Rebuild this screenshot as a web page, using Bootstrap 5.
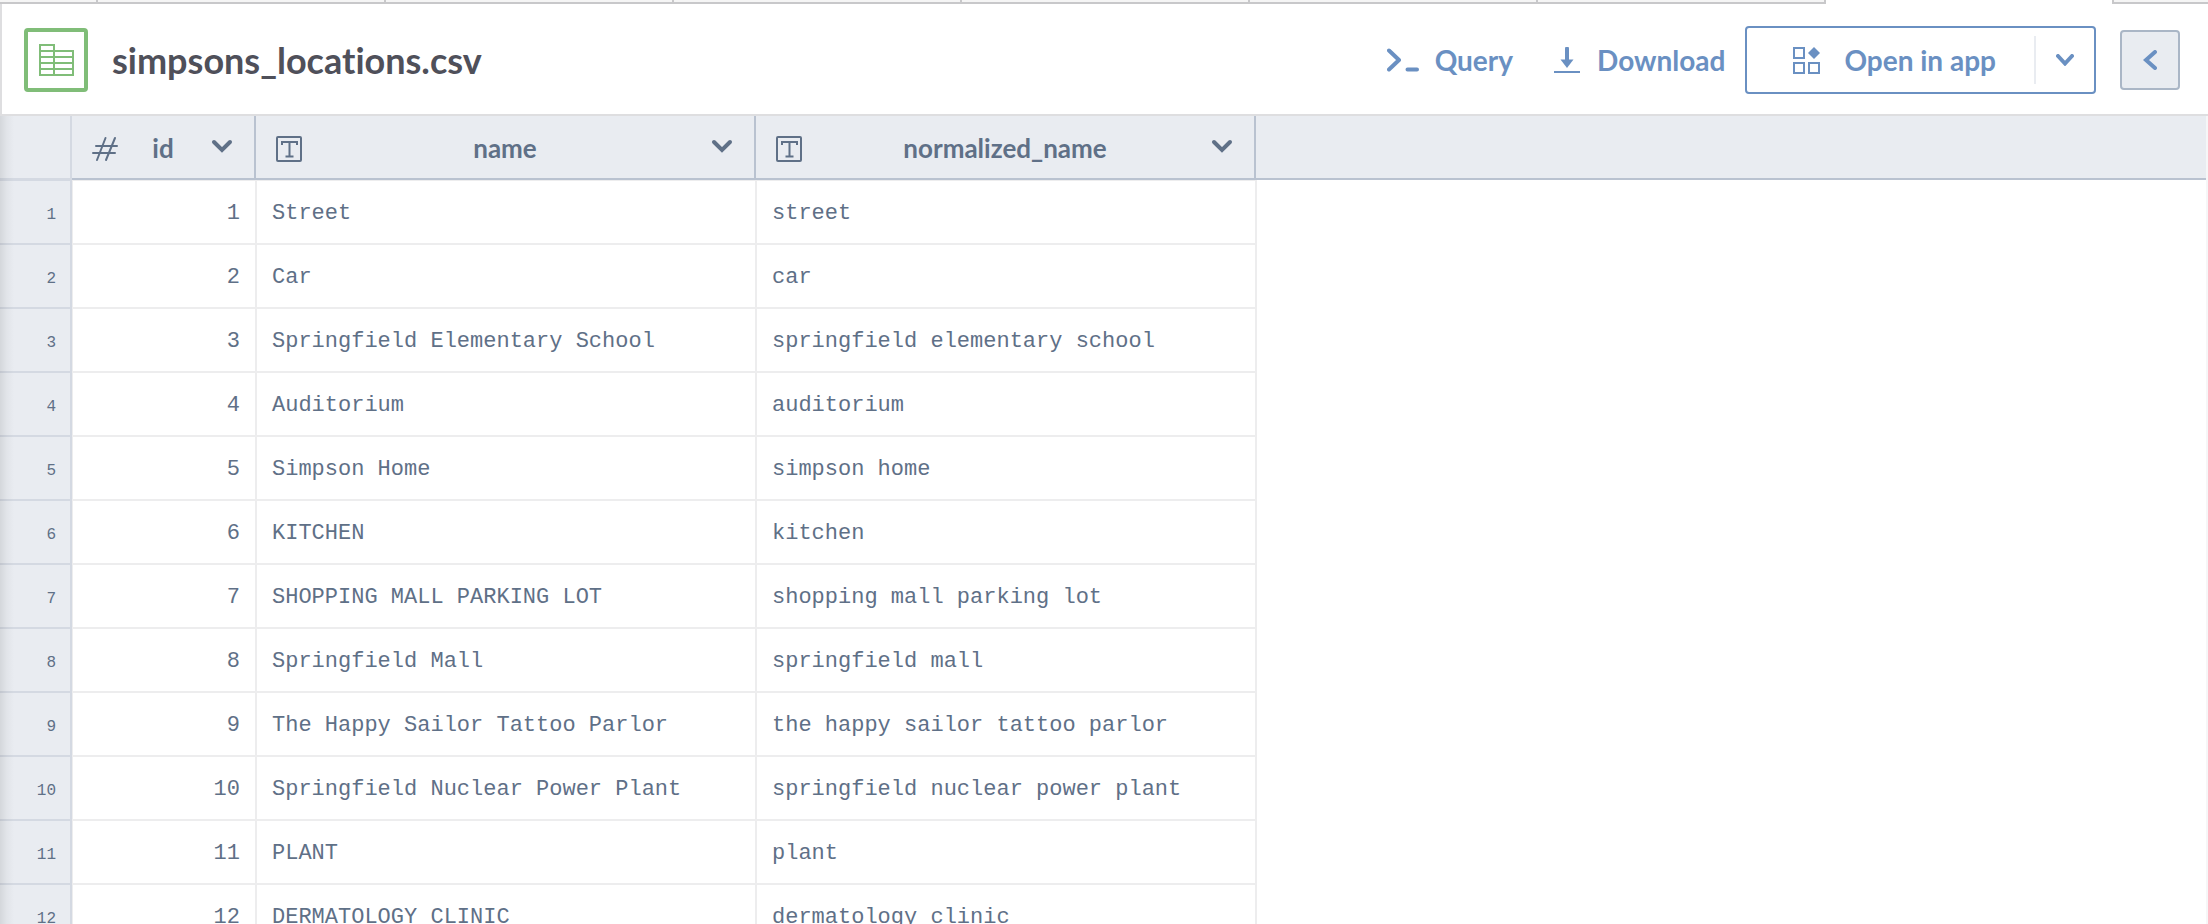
<!DOCTYPE html>
<html lang="en">
<head>
<meta charset="utf-8">
<meta name="viewport" content="width=device-width, initial-scale=1">
<title>simpsons_locations.csv</title>
<link href="https://cdn.jsdelivr.net/npm/bootstrap@5.3.0/dist/css/bootstrap.min.css" rel="stylesheet">
<style>
  :root { --accent: #6a90c2; --slate: #5f7087; --panel: #e9ecf1; --rule: #b9c2d0; --cell-rule: #ededee; --side-rule: #d4d9e2; }
  body { font-family: Lato, "Open Sans", sans-serif; font-variant-ligatures: none; color: var(--slate); background: #fff; }
  svg { display: block; flex: none; fill: none; stroke: currentColor; }

  /* tab strip */
  .strip-tab { height: 4px; background: #f5f5f5; border-bottom: 2px solid #c8c8ca; border-right: 2px solid #c8c8ca; }
  .strip-first { width: 98px; }
  .strip-last { width: 94px; border-right: 0; }
  .strip-active { background: #fff; border-bottom: 0; }

  /* title bar */
  .titlebar { min-height: 112px; padding: 2px 28px 0 22px; border-left: 2px solid #dedee0; border-bottom: 2px solid #dedee0; }
  .file-icon { width: 64px; height: 64px; border: 4px solid #80bd78; border-radius: 4px; color: #80bd78; }
  .file-title { font-size: 36px; line-height: 44px; font-weight: 700; color: #4f505a; margin: 0 0 0 24px; }
  .btn-tool { --bs-btn-padding-x: 0; --bs-btn-padding-y: 0; --bs-btn-border-width: 0; --bs-btn-color: var(--accent); --bs-btn-hover-color: var(--accent); --bs-btn-active-color: var(--accent); font-size: 28px; line-height: 34px; font-weight: 700; display: inline-flex; align-items: center; }
  .tools { gap: 40px; margin-right: 20px; }
  .split { height: 68px; border: 2px solid var(--accent); border-radius: 4px; margin-right: 24px; }
  .open-main { padding: 0 38px 0 46px; gap: 24px; }
  .split-line { width: 2px; height: 48px; background: var(--panel); }
  .open-more { width: 58px; justify-content: center; padding-left: 0; }
  .btn-collapse { width: 60px; height: 60px; background: var(--panel); border: 2px solid #aab6c6; border-radius: 4px; justify-content: center; }

  /* grid */
  .sheet { border-right: 2px solid #f6f6f7; overflow: auto; scrollbar-width: none; }
  .sheet::-webkit-scrollbar { display: none; }
  .sheet::before { content: ""; position: absolute; z-index: 1; top: 0; bottom: 0; left: 0; width: 14px; background: linear-gradient(90deg, rgba(0,0,0,.09), rgba(0,0,0,.03) 50%, transparent); pointer-events: none; }
  .sheet table { width: 100%; min-width: 1256px; table-layout: fixed; border-collapse: separate; border-spacing: 0; }
  .sheet th, .sheet td { height: 64px; padding: 0; border: 0 solid; vertical-align: middle; }
  .col-num { width: 72px; }
  .col-id { width: 184px; }
  .col-text { width: 500px; }
  thead th { background: var(--panel); font-size: 26px; line-height: 32px; font-weight: 700; }
  .sheet thead th { border-color: var(--rule); border-width: 0 2px 2px 0; }
  .sheet thead th:first-child { border-color: var(--side-rule); }
  .sheet thead th:last-child { border-right-width: 0; }
  .head-cell { padding: 0 20px; }
  .head-cell > svg { margin-top: 4px; }
  .head-cell > span { padding-top: 2px; }
  .sheet tbody td { border-color: var(--cell-rule); border-width: 1px; font-family: "Liberation Mono", monospace; font-size: 22px; line-height: 30px; padding: 4px 15px 0; white-space: nowrap; }
  .sheet tbody td:last-child { border-width: 0 0 0 1px; }
  .sheet tbody th { background: var(--panel); border-color: var(--side-rule); border-width: 1px 2px 1px 0; font-family: "Liberation Mono", monospace; font-size: 16px; line-height: 20px; font-weight: 400; text-align: right; padding: 5px 14px 0 0; }
</style>
</head>
<body>
<div class="vh-100 d-flex flex-column overflow-hidden">
  <div class="d-flex" aria-hidden="true">
    <div class="strip-tab strip-first"></div>
    <div class="strip-tab flex-fill"></div>
    <div class="strip-tab flex-fill"></div>
    <div class="strip-tab flex-fill"></div>
    <div class="strip-tab flex-fill"></div>
    <div class="strip-tab flex-fill"></div>
    <div class="strip-tab flex-fill"></div>
    <div class="strip-tab strip-active flex-fill"></div>
    <div class="strip-tab strip-last"></div>
  </div>

  <header class="titlebar d-flex align-items-center">
    <div class="file-icon d-flex align-items-center justify-content-center">
      <svg width="36" height="34" viewBox="0 0 36 34" stroke-width="2"><path d="M2 2h14v30H2zM16 8h19v24H16M2 8h14M2 14h33M2 20h33M2 26h33"/></svg>
    </div>
    <h1 class="file-title">simpsons_locations.csv</h1>

    <div class="tools d-flex align-items-center ms-auto">
      <button type="button" class="btn btn-tool gap-3">
        <svg width="32" height="24" viewBox="0 0 32 24" stroke-width="4" stroke-linecap="round" stroke-linejoin="round"><path d="M2 2.500l10 9.500L2 21.500M20.500 21.500h9.500"/></svg>
        Query
      </button>
      <button type="button" class="btn btn-tool gap-3">
        <svg width="28" height="26" viewBox="0 0 28 26"><path d="M14 1.500v13" stroke-width="4" stroke-linecap="round"/><path d="M7.500 12.500h13L14 21z" fill="currentColor" stroke="none"/><path d="M1 25h26" stroke-width="2"/></svg>
        Download
      </button>
    </div>

    <div class="split d-flex align-items-center">
      <button type="button" class="btn btn-tool open-main">
        <svg width="27" height="27" viewBox="0 0 27 27" stroke-width="2"><path d="M1 1h10v10H1zM1 16h10v10H1zM16 16h10v10H16z"/><path d="M21 0l6 6-6 6-6-6z" fill="currentColor" stroke="none"/></svg>
        Open in app
      </button>
      <div class="split-line"></div>
      <button type="button" class="btn btn-tool open-more" aria-label="More apps">
        <svg width="18" height="12" viewBox="0 0 18 12" stroke-width="4" stroke-linecap="round"><path d="M2 2l7 7.500L16 2"/></svg>
      </button>
    </div>
    <button type="button" class="btn btn-tool btn-collapse" aria-label="Collapse panel">
      <svg width="14" height="20" viewBox="0 0 14 20" stroke-width="4" stroke-linecap="round"><path d="M12 2L3 10l9 8"/></svg>
    </button>
  </header>

  <main class="sheet position-relative flex-fill">
    <table>
      <colgroup><col class="col-num"><col class="col-id"><col class="col-text"><col class="col-text"><col></colgroup>
      <thead>
        <tr>
          <th></th>
          <th scope="col">
            <div class="head-cell d-flex align-items-center justify-content-between">
              <svg width="26" height="26" viewBox="0 0 26 26" stroke-width="2" stroke-linecap="round"><path d="M4 10h21M1 17h22M13.500 2L5 24M23 2l-9 22"/></svg>
              <span>id</span>
              <button type="button" class="btn btn-tool text-reset" aria-label="id column menu"><svg width="26" height="16" viewBox="0 0 26 16" stroke-width="4" stroke-linecap="round"><path d="M6 3l8 8 8-8"/></svg></button>
            </div>
          </th>
          <th scope="col">
            <div class="head-cell d-flex align-items-center justify-content-between">
              <svg width="26" height="26" viewBox="0 0 26 26" stroke-width="2"><rect x="1" y="1" width="24" height="24" rx="1"/><path d="M6 9V6h15v3M13.500 6v14M9.500 20.500h8"/></svg>
              <span>name</span>
              <button type="button" class="btn btn-tool text-reset" aria-label="name column menu"><svg width="26" height="16" viewBox="0 0 26 16" stroke-width="4" stroke-linecap="round"><path d="M6 3l8 8 8-8"/></svg></button>
            </div>
          </th>
          <th scope="col">
            <div class="head-cell d-flex align-items-center justify-content-between">
              <svg width="26" height="26" viewBox="0 0 26 26" stroke-width="2"><rect x="1" y="1" width="24" height="24" rx="1"/><path d="M6 9V6h15v3M13.500 6v14M9.500 20.500h8"/></svg>
              <span>normalized_name</span>
              <button type="button" class="btn btn-tool text-reset" aria-label="normalized_name column menu"><svg width="26" height="16" viewBox="0 0 26 16" stroke-width="4" stroke-linecap="round"><path d="M6 3l8 8 8-8"/></svg></button>
            </div>
          </th>
          <th></th>
        </tr>
      </thead>
      <tbody>
        <tr><th scope="row">1</th><td class="text-end">1</td><td>Street</td><td>street</td><td></td></tr>
        <tr><th scope="row">2</th><td class="text-end">2</td><td>Car</td><td>car</td><td></td></tr>
        <tr><th scope="row">3</th><td class="text-end">3</td><td>Springfield Elementary School</td><td>springfield elementary school</td><td></td></tr>
        <tr><th scope="row">4</th><td class="text-end">4</td><td>Auditorium</td><td>auditorium</td><td></td></tr>
        <tr><th scope="row">5</th><td class="text-end">5</td><td>Simpson Home</td><td>simpson home</td><td></td></tr>
        <tr><th scope="row">6</th><td class="text-end">6</td><td>KITCHEN</td><td>kitchen</td><td></td></tr>
        <tr><th scope="row">7</th><td class="text-end">7</td><td>SHOPPING MALL PARKING LOT</td><td>shopping mall parking lot</td><td></td></tr>
        <tr><th scope="row">8</th><td class="text-end">8</td><td>Springfield Mall</td><td>springfield mall</td><td></td></tr>
        <tr><th scope="row">9</th><td class="text-end">9</td><td>The Happy Sailor Tattoo Parlor</td><td>the happy sailor tattoo parlor</td><td></td></tr>
        <tr><th scope="row">10</th><td class="text-end">10</td><td>Springfield Nuclear Power Plant</td><td>springfield nuclear power plant</td><td></td></tr>
        <tr><th scope="row">11</th><td class="text-end">11</td><td>PLANT</td><td>plant</td><td></td></tr>
        <tr><th scope="row">12</th><td class="text-end">12</td><td>DERMATOLOGY CLINIC</td><td>dermatology clinic</td><td></td></tr>
      </tbody>
    </table>
  </main>
</div>
<script src="https://cdn.jsdelivr.net/npm/bootstrap@5.3.0/dist/js/bootstrap.bundle.min.js"></script>
</body>
</html>
